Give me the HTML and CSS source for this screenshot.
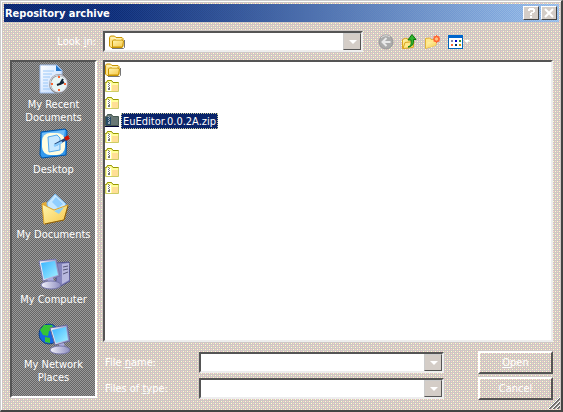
FILE: index.html
```html
<!DOCTYPE html>
<html lang="en">
<head>
<meta charset="utf-8">
<title>Repository archive</title>
<link rel="stylesheet" href="styles.css">
</head>
<body>
<svg class="defs" aria-hidden="true">
  <defs>
    <linearGradient id="gold" x1="0" y1="0" x2="1" y2="1"><stop offset="0" stop-color="#fff6b0"/><stop offset="1" stop-color="#f6c84a"/></linearGradient>
    <linearGradient id="screen" x1="0" y1="0" x2="1" y2="1"><stop offset="0" stop-color="#39b4ff"/><stop offset="1" stop-color="#a5f0ff"/></linearGradient>
    <linearGradient id="paper" x1="0" y1="0" x2="1" y2="1"><stop offset="0" stop-color="#fff"/><stop offset="1" stop-color="#b9d6ff"/></linearGradient>
    <linearGradient id="metal" x1="0" y1="0" x2="1" y2="0"><stop offset="0" stop-color="#f2f2fb"/><stop offset="1" stop-color="#8d8dc0"/></linearGradient>
    <symbol id="folder" viewBox="0 0 16 16">
      <path d="M3 14.500h11.500l1-1V6" fill="none" stroke="#777" stroke-width="1"/>
      <path d="M.5 12V3.500l1-1.500h4l1.500 1.500h6l1 1V12l-1 1.500H2z" fill="#ffe48a" stroke="#c89400"/>
      <path d="M3.500 13V7l1-1h8.500l1.500 1-1 6z" fill="url(#gold)" stroke="#c89400"/>
      <path d="M2 4h4l1 1h5" fill="none" stroke="#fffbd0"/>
    </symbol>
    <symbol id="zip" viewBox="0 0 16 16">
      <path d="M.5 12.500V3.500h1l1-2h4l1.500 2h5.500v9z" fill="#ffff9c" stroke="#cccc66"/>
      <path d="M.5 4V3.500h1l1-2h4l1.500 2h5.500" fill="none" stroke="#999900"/>
      <path d="M7 6h6v6H7z" fill="#ffdf96"/>
      <path d="M2 4h4v8H2z" fill="#fff"/>
      <path d="M3 3h1v1H3zM4 4h1v1H4zM3 5h1v1H3zM4 6h1v1H4zM3 7h1v1H3zM4 8h1v1H4zM3 9h2v2H3z" fill="#777"/>
    </symbol>
    <symbol id="zip-on" viewBox="0 0 16 16">
      <path d="M.5 12.500V3.500h1l1-2h4l1.500 2h5.500v9z" fill="#687775" stroke="#465950"/>
      <path d="M1 4h5v8H1z" fill="#294c66"/>
      <path d="M3 3h1v1H3zM4 4h1v1H4zM3 5h1v1H3zM4 6h1v1H4zM3 7h1v1H3zM4 8h1v1H4zM3 9h2v2H3z" fill="#9ab"/>
      <path d="M0 13.500h14" stroke="#003"/>
    </symbol>
  </defs>
</svg>
<main class="window">
  <header class="titlebar">
    <h1>Repository archive</h1>
    <button class="caption" type="button" aria-label="Help"><svg viewBox="0 0 14 12"><path d="M4 2h2v2H4zM5 1h5v2H5zM9 2h2v3H9zM7 5h3v1H7zM6 6h2v2H6zM6 9h2v2H6z" fill="#fff"/></svg></button>
    <button class="caption" type="button" aria-label="Close"><svg viewBox="0 0 14 12"><path d="M3 2l8 8M11 2l-8 8" fill="none" stroke="#fff" stroke-width="2"/></svg></button>
  </header>

  <form class="dialog">
    <div class="lookin">
      <label for="look">Look <u>i</u>n:</label>
      <span class="combo">
        <svg class="combo-icon" viewBox="0 0 16 16" aria-hidden="true"><use href="#folder"/></svg>
        <select id="look"><option></option></select>
      </span>
      <div class="tools">
        <button type="button" aria-label="Back"><svg viewBox="0 0 16 16"><circle cx="8" cy="8" r="7" fill="#aaa" stroke="#999"/><path d="M3 4a6.500 6.500 0 0 1 9-1" fill="none" stroke="#ddd"/><path d="M12.500 8H5M8.500 4L4.500 8l4 4" fill="none" stroke="#e8e8e8" stroke-width="2"/></svg></button>
        <button type="button" aria-label="Up one level"><svg viewBox="0 0 16 16"><path d="M1.500 14.500v-9L5 4l1 1 6.500-.5V13z" fill="url(#gold)" stroke="#d9a520"/><path d="M2 14.500l2-6 9-1-1 6z" fill="#ffe88a" stroke="#d9a520"/><path d="M7 13c3-1 3.500-3 3-7H7L11 .5 15 5.500h-2.500C13 10 11 13 7 13z" fill="#31b431" stroke="#087a08"/></svg></button>
        <button type="button" aria-label="New folder"><svg viewBox="0 0 16 16"><path d="M1.500 14.500V4.500L6 4l1 1.500h5V11z" fill="#ffe88a" stroke="#e2b23a"/><path d="M2 14l2-6h9l-2 4z" fill="url(#gold)"/><circle cx="12.500" cy="5" r="2.500" fill="#ffc080" stroke="#f63" stroke-width="1.500"/><path d="M12.500 1v2M12.500 7v2M14.500 5H16M10 2.500l1 1M15 2.500l-1 1M15 7.500l-1-1M10 7.500l1-1" stroke="#f63"/></svg></button>
        <button class="views" type="button" aria-label="View menu"><svg viewBox="0 0 16 16"><rect x="1.500" y="1.500" width="14" height="13" fill="#fff" stroke="#06b"/><path d="M1 1h15v3H1z" fill="#06c"/><path d="M4 6h2v2H4z" fill="#88a"/><path d="M8 6h2v2H8z" fill="#00c"/><path d="M12 6h2v2h-2z" fill="#393"/><path d="M4 10h2v2H4z" fill="#f63"/><path d="M8 10h2v2H8z" fill="#036"/><path d="M12 10h2v2h-2z" fill="#c90"/></svg><i class="arrow"></i></button>
      </div>
    </div>

    <div class="body">
      <nav class="places">
        <a href="#recent"><svg viewBox="0 0 32 32"><path d="M2 2h17l5 5v23H2z" fill="url(#paper)" stroke="#9dbbe8"/><path d="M18 2v6h6z" fill="#27c"/><path d="M5 8h11M5 11h9M5 14h7M5 17h5M5 20h5M5 23h5M5 26h7" stroke="#9ac8f8"/><circle cx="21" cy="21" r="9" fill="#e8f5f5" stroke="#888" stroke-width="2"/><circle cx="20.500" cy="20.500" r="8.500" fill="none" stroke="#dde"/><path d="M19 22l3-1 3-5M22 21l4-2" fill="none" stroke="#123" stroke-width="2"/><path d="M20 14h2M20 27h2M14 20v2M27 20v2" stroke="#f63" stroke-width="2"/></svg><span>My Recent Documents</span></a>
        <a href="#desktop"><svg viewBox="0 0 32 32"><path d="M3 4l24-3 2 2-1 24-24 3-2-3z" fill="#39e" stroke="#05a"/><path d="M4 5l23-3-1 6-21 13z" fill="#8cf" opacity=".7"/><rect x="4" y="5" width="23" height="22" rx="8" fill="#fffde0"/><path d="M10 9l9-2 3 3v12l-11 2z" fill="#c8e8ff" stroke="#5ae"/><path d="M17 17l11-6" stroke="#247" stroke-width="3"/><path d="M16 18l8-4" stroke="#8cf" stroke-width="2"/><path d="M27 11l4-2" stroke="#c10" stroke-width="4"/></svg><span>Desktop</span></a>
        <a href="#documents"><svg viewBox="0 0 32 32"><path d="M4 10l4-1 3 3 14-1 4 1-4 13-19 4z" fill="#e5ad38"/><path d="M9 10L17 1l11 10-6 12-12-4z" fill="#c5e7ff" stroke="#78b8f0"/><path d="M14 9l4-5 7 7-5 4z" fill="#8fceff"/><path d="M4 11l12 6 14-5-4 15-20 4z" fill="url(#gold)" stroke="#dba12b"/><path d="M16 18l10-4-5 7z" fill="#8cd0f8"/><path d="M7 31l19-4 4-14" fill="none" stroke="#855c10"/></svg><span>My Documents</span></a>
        <a href="#computer"><svg viewBox="0 0 32 32"><path d="M19 5l12-1 1 19-9 5-5-4z" fill="#8585bd" stroke="#55558e"/><path d="M24 6l7-1v17l-7 4z" fill="#b8b8de"/><path d="M25 9l5-1M25 12l5-1M25 16l5-2" stroke="#557"/><path d="M1 3l17-2 4 17-17 5z" fill="url(#metal)" stroke="#77a"/><path d="M3 5l14-2 3 14-14 4z" fill="url(#screen)"/><path d="M9 21l6-2 1 5-5 2z" fill="#aad"/><ellipse cx="13" cy="27" rx="10" ry="4" fill="url(#metal)" stroke="#77a"/></svg><span>My Computer</span></a>
        <a href="#network"><svg viewBox="0 0 32 32"><circle cx="11" cy="11" r="10" fill="#1768e0" stroke="#148"/><path d="M6 2l8 0 2 4-5 2-1 5-5-1-3-5zM7 14l5 1v5l-5-1z" fill="#35c435"/><path d="M12 5l17-3 3 16-15 4z" fill="url(#metal)" stroke="#669"/><path d="M14 7l14-3 2 13-12 3z" fill="url(#screen)"/><path d="M21 21l5-1 1 5-5 1z" fill="#aad"/><ellipse cx="22" cy="27" rx="10" ry="4" fill="url(#metal)" stroke="#77a"/></svg><span>My Network Places</span></a>
      </nav>

      <div class="main">
        <ul class="files">
          <li><svg><use href="#folder"/></svg></li>
          <li><svg><use href="#zip"/></svg></li>
          <li><svg><use href="#zip"/></svg></li>
          <li class="selected"><svg><use href="#zip-on"/></svg><span>EuEditor.0.0.2A.zip</span></li>
          <li><svg><use href="#zip"/></svg></li>
          <li><svg><use href="#zip"/></svg></li>
          <li><svg><use href="#zip"/></svg></li>
          <li><svg><use href="#zip"/></svg></li>
        </ul>
        <div class="fields">
          <label for="name">File <u>n</u>ame:</label>
          <span class="combo"><input id="name" type="text"></span>
          <button class="push" type="submit"><u>O</u>pen</button>
          <label for="type">Files of <u>t</u>ype:</label>
          <span class="combo"><select id="type"><option></option></select></span>
          <button class="push" type="button">Cancel</button>
        </div>
      </div>
    </div>
  </form>
  <svg class="grip" viewBox="0 0 12 12" aria-hidden="true"><path d="M1 12L12 1M5 12l7-7M9 12l3-3" stroke="#666" stroke-width="2"/><path d="M0 12L12 0M4 12l8-8M8 12l4-4" stroke="#fff"/></svg>
</main>
</body>
</html>
```
FILE: styles.css
```css
:root {
  --face: #d4cdc7;
  --dither:
    conic-gradient(at 1px 1px, transparent 75%, #ffffcc 0) 0 0 / 4px 4px,
    conic-gradient(at 1px 1px, transparent 75%, #ffffcc 0) 2px 2px / 4px 4px,
    conic-gradient(at 1px 1px, transparent 75%, #ffcccc 0) 2px 0 / 4px 4px,
    conic-gradient(at 1px 1px, transparent 75%, #ffcccc 0) 0 2px / 4px 4px,
    #cdc7c4;
}

* { box-sizing: border-box; }

body {
  margin: 0;
  font: 11px/13px "DejaVu Sans Condensed", "DejaVu Sans", sans-serif;
  color: #fff;
}

button, input, select { font: inherit; color: inherit; }
svg { display: block; }
.defs { position: absolute; width: 0; height: 0; }

.window {
  position: relative;
  display: flex;
  flex-direction: column;
  min-height: 100vh;
  padding: 2px;
  background: var(--dither);
  border: 1px solid #ccc;
  border-right: 2px solid #444;
  border-bottom: 2px solid #444;
  box-shadow: inset 1px 1px #fff;
}

.titlebar {
  display: flex;
  align-items: center;
  height: 18px;
  margin: 1px 0 1px 1px;
  padding: 0 2px 0 1px;
  background:
    conic-gradient(#3366cc33 25%, transparent 0 50%, #3366cc33 0 75%, transparent 0) 0 0 / 2px 2px,
    linear-gradient(90deg, #0a246a, #0e2c74 20%, #a6caf0);
}

.titlebar h1 { flex: 1; margin: 0; font-size: 11px; font-weight: bold; }

.caption {
  width: 16px;
  height: 14px;
  padding: 0;
  background: var(--face);
  border: 1px solid;
  border-color: #fff #444 #444 #fff;
}

.caption + .caption { margin-left: 2px; }
.caption svg { width: 14px; height: 12px; }

.dialog {
  flex: 1;
  display: flex;
  flex-direction: column;
  padding: 8px 6px 8px 7px;
}

.lookin {
  display: grid;
  grid-template-columns: 86px 260px 1fr;
  column-gap: 7px;
  align-items: center;
}

.lookin label { text-align: right; }

.combo {
  position: relative;
  display: flex;
  align-items: center;
  height: 21px;
  background: #fff;
  border: 2px solid;
  border-color: #555 #eee #eee #555;
}

.combo select, .combo input {
  width: 100%;
  height: 100%;
  padding: 0 18px 0 4px;
  color: #000;
  background: none;
  border: 0;
  outline: 0;
  appearance: none;
}

.combo-icon { flex: none; width: 16px; height: 16px; margin-left: 4px; }

.combo::before, .combo::after {
  content: "";
  position: absolute;
  pointer-events: none;
}

.combo::before {
  top: 0;
  right: 0;
  bottom: 0;
  width: 16px;
  background: var(--face);
  border: 1px solid;
  border-color: #ccc #555 #555 #ccc;
}

.combo::after, .arrow {
  border: 4px solid transparent;
  border-top-color: #fff;
  border-bottom: 0;
}

.combo::after { top: 7px; right: 4px; }

.tools { display: flex; gap: 7px; padding-left: 8px; }

.tools button {
  display: flex;
  align-items: center;
  padding: 0;
  background: none;
  border: 0;
}

.tools svg { width: 16px; height: 16px; }
.arrow { margin-left: 1px; border-width: 3px 3px 0; }

.body {
  flex: 1;
  display: grid;
  grid-template-columns: 87px 1fr;
  column-gap: 6px;
  padding-top: 8px;
}

.places {
  display: grid;
  grid-auto-rows: 65px;
  align-self: start;
  height: 338px;
  padding-top: 1px;
  background: conic-gradient(#666 25%, #999 0 50%, #666 0 75%, #999 0) 0 0 / 2px 2px;
  border: 2px solid;
  border-color: #555 #fff #fff #555;
}

.places a {
  display: flex;
  flex-direction: column;
  align-items: center;
  gap: 3px;
  padding: 0 8px;
  color: #fff;
  text-align: center;
  text-decoration: none;
}

.places a:not(:first-child) span { margin: 0 -8px; }
.places a:last-child span { margin: 0; }
.places svg { flex: none; width: 32px; height: 32px; }

.main { display: flex; flex-direction: column; }

.files {
  flex: 1;
  margin: 0;
  padding: 0;
  list-style: none;
  background: #fff;
  border: 2px solid;
  border-color: #555 #eee #eee #555;
}

.files li { display: flex; height: 17px; }
.files svg { width: 16px; height: 16px; }

.files span {
  height: 16px;
  padding: 1px;
  background: #0a246a;
  border: 1px dotted #cc9;
}

.fields {
  display: grid;
  grid-template-columns: 96px minmax(0, 245px) minmax(75px, 1fr);
  gap: 3px 0;
  align-items: center;
  padding-top: 9px;
}

.fields label { padding-left: 2px; }

.push {
  justify-self: end;
  width: 75px;
  height: 23px;
  padding: 0;
  background: var(--dither);
  border: 2px solid;
  border-color: #fff #555 #555 #fff;
}

.grip { position: absolute; right: 1px; bottom: 1px; width: 12px; height: 12px; }
```
